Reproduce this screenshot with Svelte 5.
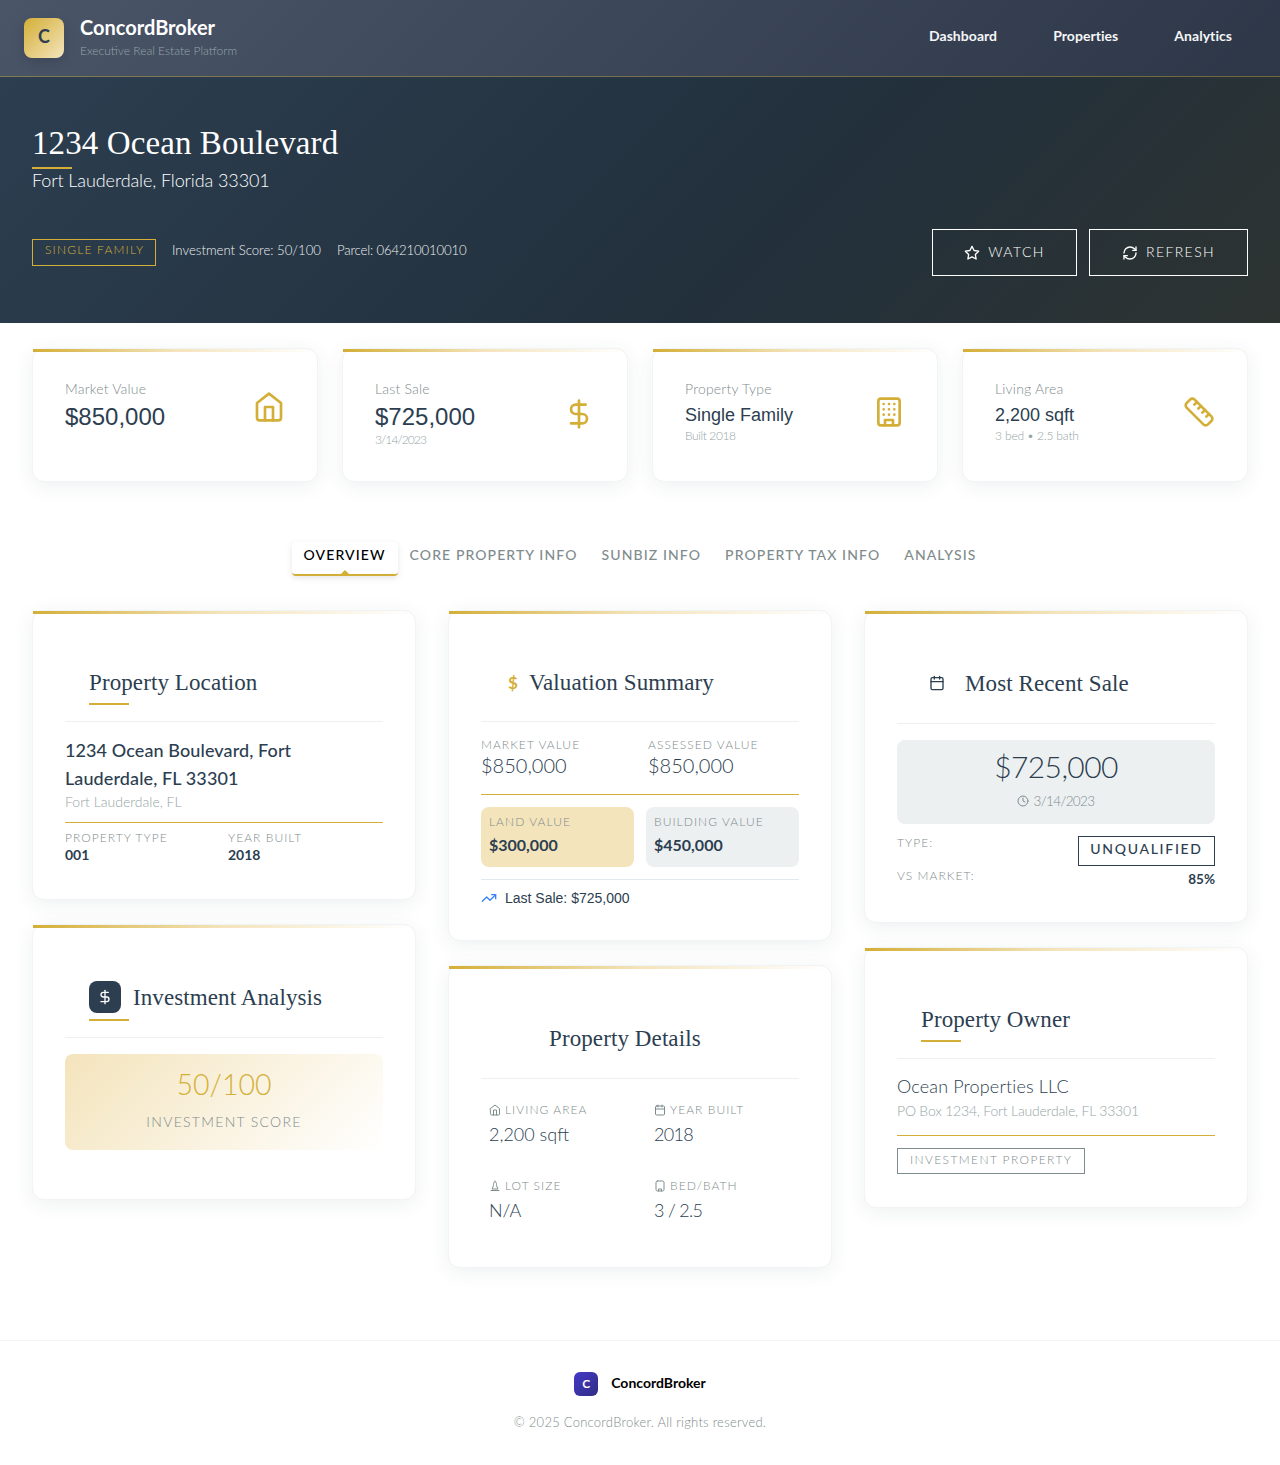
<script>
  const icons = {
    home: '<path d="m3 9 9-7 9 7v11a2 2 0 0 1-2 2H5a2 2 0 0 1-2-2z"/><polyline points="9 22 9 12 15 12 15 22"/>',
    dollar: '<line x1="12" x2="12" y1="2" y2="22"/><path d="M17 5H9.5a3.5 3.5 0 0 0 0 7h5a3.5 3.5 0 0 1 0 7H6"/>',
    building: '<rect x="4" y="2" width="16" height="20" rx="2"/><path d="M9 22v-4h6v4"/><path d="M8 6h.01M12 6h.01M16 6h.01M8 10h.01M12 10h.01M16 10h.01M8 14h.01M12 14h.01M16 14h.01"/>',
    ruler: '<path d="M21.3 15.3a2.4 2.4 0 0 1 0 3.4l-2.6 2.6a2.4 2.4 0 0 1-3.4 0L2.7 8.7a2.41 2.41 0 0 1 0-3.4l2.6-2.6a2.41 2.41 0 0 1 3.4 0Z"/><path d="m14.5 12.5 2-2M11.5 9.5l2-2M8.5 6.5l2-2M17.5 15.5l2-2"/>',
    star: '<polygon points="12 2 15.09 8.26 22 9.27 17 14.14 18.18 21.02 12 17.77 5.82 21.02 7 14.14 2 9.27 8.91 8.26 12 2"/>',
    refresh: '<path d="M3 12a9 9 0 0 1 9-9 9.75 9.75 0 0 1 6.74 2.74L21 8"/><path d="M21 3v5h-5"/><path d="M21 12a9 9 0 0 1-9 9 9.75 9.75 0 0 1-6.74-2.74L3 16"/><path d="M8 16H3v5"/>',
    calendar: '<path d="M8 2v4M16 2v4"/><rect x="3" y="4" width="18" height="18" rx="2"/><path d="M3 10h18"/>',
    clock: '<circle cx="12" cy="12" r="10"/><polyline points="12 6 12 12 16 14"/>',
    trend: '<polyline points="22 7 13.5 15.5 8.5 10.5 2 17"/><polyline points="16 7 22 7 22 13"/>',
    lot: '<path d="M12 3c2 1 3 3 3 6 0 4 2 6 3 9H6c1-3 3-5 3-9 0-3 1-5 3-6Z"/><path d="M4 21h16"/>',
    bed: '<rect x="4" y="2" width="16" height="20" rx="3"/><path d="M9 22v-4h6v4"/>'
  };

  const stats = [
    { label: "Market Value", value: "$850,000", icon: "home" },
    { label: "Last Sale", value: "$725,000", sub: "3/14/2023", icon: "dollar", subClass: "tight" },
    { label: "Property Type", value: "Single Family", sub: "Built 2018", icon: "building", small: true, subClass: "snug" },
    { label: "Living Area", value: "2,200 sqft", sub: "3 bed • 2.5 bath", icon: "ruler", small: true, subClass: "slight" }
  ];

  const tabs = ["Overview", "Core Property Info", "Sunbiz Info", "Property Tax Info", "Analysis"];

  const details = [
    { label: "Living Area", value: "2,200 sqft", icon: "home" },
    { label: "Year Built", value: "2018", icon: "calendar", tight: true },
    { label: "Lot Size", value: "N/A", icon: "lot" },
    { label: "Bed/Bath", value: "3 / 2.5", icon: "bed", tight: true }
  ];
</script>

{#snippet icon(name, size)}
  <svg class="icon" width={size} height={size} viewBox="0 0 24 24" fill="none" stroke="currentColor" stroke-width="2" stroke-linecap="round" stroke-linejoin="round">{@html icons[name]}</svg>
{/snippet}

<div class="page">
  <header class="topbar">
    <div class="brand">
      <div class="logo">C</div>
      <div>
        <div class="brand-name">ConcordBroker</div>
        <div class="brand-sub">Executive Real Estate Platform</div>
      </div>
    </div>
    <nav>
      <span>Dashboard</span>
      <span>Properties</span>
      <span>Analytics</span>
    </nav>
  </header>

  <section class="hero">
    <h1>1234 Ocean Boulevard</h1>
    <div class="hero-rule"></div>
    <div class="hero-city">Fort Lauderdale, Florida 33301</div>
    <div class="hero-row">
      <div class="hero-meta">
        <span class="hero-badge">SINGLE FAMILY</span>
        <span>Investment Score: 50/100</span>
        <span class="parcel">Parcel: 064210010010</span>
      </div>
      <div class="hero-actions">
        <button class="watch">{@render icon("star", 16)} <span>WATCH</span></button>
        <button class="refresh">{@render icon("refresh", 16)} <span>REFRESH</span></button>
      </div>
    </div>
  </section>

  <main>
    <div class="stats">
      {#each stats as s}
        <div class="card stat">
          <div class="stat-row">
            <div>
              <div class="stat-label">{s.label}</div>
              <div class="stat-value" class:small={s.small}>{s.value}</div>
              {#if s.sub}<div class="stat-sub {s.subClass}">{s.sub}</div>{/if}
            </div>
            <div class="stat-icon">{@render icon(s.icon, 32)}</div>
          </div>
        </div>
      {/each}
    </div>

    <div class="tabs">
      {#each tabs as t, i}
        <div class="tab" class:active={i === 0}>{t}</div>
      {/each}
    </div>

    <div class="columns">
      <div class="col">
        <div class="card panel">
          <div class="head ruled">
            <h3>Property Location</h3>
          </div>
          <div class="address">1234 Ocean Boulevard, Fort Lauderdale, FL 33301</div>
          <div class="muted-sm">Fort Lauderdale, FL</div>
          <div class="pair">
            <div>
              <div class="caps">PROPERTY TYPE</div>
              <div class="strong">001</div>
            </div>
            <div>
              <div class="caps">YEAR BUILT</div>
              <div class="strong">2018</div>
            </div>
          </div>
        </div>

        <div class="card panel">
          <div class="head ruled tall">
            <span class="square">{@render icon("dollar", 16)}</span>
            <h3>Investment Analysis</h3>
          </div>
          <div class="score">
            <div class="score-value">50/100</div>
            <div class="score-label">INVESTMENT SCORE</div>
          </div>
        </div>
      </div>

      <div class="col">
        <div class="card panel">
          <div class="head val">
            <span class="gold-dollar">$</span>
            <h3>Valuation Summary</h3>
          </div>
          <div class="val-grid">
            <div>
              <div class="caps">MARKET VALUE</div>
              <div class="light-value">$850,000</div>
            </div>
            <div>
              <div class="caps">ASSESSED VALUE</div>
              <div class="light-value">$850,000</div>
            </div>
          </div>
          <div class="val-boxes">
            <div class="val-box land">
              <div class="caps">LAND VALUE</div>
              <div class="val-box-num">$300,000</div>
            </div>
            <div class="val-box building">
              <div class="caps">BUILDING VALUE</div>
              <div class="val-box-num">$450,000</div>
            </div>
          </div>
          <div class="last-sale">
            <span class="trend">{@render icon("trend", 16)}</span>
            Last Sale: $725,000
          </div>
        </div>

        <div class="card panel">
          <div class="head details-head">
            <h3>Property Details</h3>
          </div>
          <div class="details">
            {#each details as d}
              <div>
                <div class="caps detail-label">{@render icon(d.icon, 12)} {d.label.toUpperCase()}</div>
                <div class="detail-value" class:tight={d.tight}>{d.value}</div>
              </div>
            {/each}
          </div>
        </div>
      </div>

      <div class="col">
        <div class="card panel">
          <div class="head sale-head">
            <span class="cal">{@render icon("calendar", 16)}</span>
            <h3>Most Recent Sale</h3>
          </div>
          <div class="sale-box">
            <div class="sale-price">$725,000</div>
            <div class="sale-date">{@render icon("clock", 12)} 3/14/2023</div>
          </div>
          <div class="sale-row">
            <span class="caps">TYPE:</span>
            <span class="sale-type">UNQUALIFIED</span>
          </div>
          <div class="sale-row market">
            <span class="caps">VS MARKET:</span>
            <span class="strong">85%</span>
          </div>
        </div>

        <div class="card panel">
          <div class="head ruled">
            <h3>Property Owner</h3>
          </div>
          <div class="owner-name">Ocean Properties LLC</div>
          <div class="muted-sm owner-addr">PO Box 1234, Fort Lauderdale, FL 33301</div>
          <div class="owner-tag-row">
            <span class="owner-tag">INVESTMENT PROPERTY</span>
          </div>
        </div>
      </div>
    </div>
  </main>

  <footer>
    <div class="foot-brand">
      <span class="foot-logo">C</span>
      <span class="foot-name">ConcordBroker</span>
    </div>
    <div class="foot-copy">© 2025 ConcordBroker. All rights reserved.</div>
  </footer>
</div>

<style>
  :global(body) {
    background: #fff;
  }

  .page {
    font-family: "Lato", "Liberation Sans", sans-serif;
    color: #2c3e50;
    background: #fff;
    min-height: 1465px;
  }

  .icon {
    display: block;
    flex: none;
  }

  /* top bar */
  .topbar {
    height: 76px;
    box-sizing: content-box;
    display: flex;
    align-items: center;
    justify-content: space-between;
    padding: 0 48px 0 24px;
    background: linear-gradient(135deg, #4a5568, #2d3748);
    border-bottom: 1px solid rgba(212, 175, 55, 0.4);
  }

  .brand {
    display: flex;
    align-items: center;
    gap: 16px;
  }

  .logo {
    width: 40px;
    height: 40px;
    box-sizing: border-box;
    padding-bottom: 4px;
    border-radius: 8px;
    display: flex;
    align-items: center;
    justify-content: center;
    background: linear-gradient(135deg, #d4af37, #f4e4bc);
    color: #2c3e50;
    font-weight: 700;
    font-size: 18px;
    box-shadow: 0 4px 12px rgba(0, 0, 0, 0.15);
  }

  .brand-name {
    color: #fff;
    font-size: 20px;
    font-weight: 700;
    line-height: 23px;
  }

  .brand-sub {
    color: #95a5a6;
    font-size: 12px;
    line-height: 20px;
    font-weight: 300;
    padding-top: 2px;
  }

  nav {
    display: flex;
    gap: 56px;
    padding-bottom: 6px;
    color: #f5f6f7;
    font-size: 14px;
    font-weight: 700;
    letter-spacing: 0.05px;
  }

  /* hero */
  .hero {
    height: 246px;
    box-sizing: border-box;
    padding: 47px 32px 0;
    color: #fff;
    background: linear-gradient(135deg, #2c3e50 0%, #22303c 60%, #2d3331 100%);
  }

  h1 {
    margin: 0;
    font-family: "Liberation Serif", serif;
    font-weight: 400;
    font-size: 33px;
    letter-spacing: 0.1px;
    line-height: 38px;
  }

  .hero-rule {
    width: 40px;
    height: 2px;
    margin-top: 5px;
    background: #d4af37;
  }

  .hero-city {
    font-size: 18px;
    font-weight: 300;
    letter-spacing: -0.1px;
    line-height: 24px;
    margin-top: -1px;
  }

  .hero-row {
    display: flex;
    align-items: center;
    justify-content: space-between;
    margin-top: 37px;
  }

  .hero-meta {
    display: flex;
    align-items: center;
    gap: 16px;
    font-size: 13.2px;
    font-weight: 300;
    color: #ecf0f1;
  }

  .hero-meta span {
    padding-bottom: 5px;
  }

  .hero-meta .parcel {
    letter-spacing: -0.15px;
  }

  .hero-meta .hero-badge {
    border: 1px solid #d4af37;
    color: #d4af37;
    font-size: 12px;
    letter-spacing: 1.2px;
    padding: 2px 12px 8px;
    width: 124px;
    box-sizing: border-box;
    white-space: nowrap;
  }

  .hero-actions {
    display: flex;
    gap: 12px;
  }

  .hero-actions button {
    height: 47px;
    display: flex;
    align-items: center;
    justify-content: center;
    gap: 8px;
    background: transparent;
    border: 1px solid #fff;
    color: #fff;
    font: inherit;
    font-size: 14px;
    font-weight: 300;
    letter-spacing: 1.4px;
  }

  .hero-actions button span {
    padding-bottom: 2px;
  }

  .watch {
    width: 145px;
  }

  .refresh {
    width: 159px;
  }

  /* content */
  main {
    padding: 25px 32px 0;
  }

  .card {
    position: relative;
    background: #fff;
    border: 1px solid #f1f3f4;
    border-radius: 12px;
    box-shadow: 0 4px 20px rgba(44, 62, 80, 0.08);
  }

  .card::before {
    content: "";
    position: absolute;
    top: 0;
    left: 0;
    right: 0;
    height: 3px;
    background: linear-gradient(90deg, #d4af37, #f4e4bc, transparent);
  }

  .stats {
    display: grid;
    grid-template-columns: repeat(4, 1fr);
    gap: 24px;
  }

  .stat {
    height: 134px;
    box-sizing: border-box;
    padding: 31px 32px 32px;
  }

  .stat-row {
    display: flex;
    align-items: center;
    justify-content: space-between;
  }

  .stat-label {
    font-size: 14px;
    font-weight: 300;
    letter-spacing: 0.2px;
    color: #7f8c8d;
    line-height: 17px;
  }

  .stat-value {
    font-family: "Liberation Sans", sans-serif;
    font-size: 24px;
    line-height: 32px;
    margin-top: 4px;
  }

  .stat-value.small {
    font-size: 18px;
    line-height: 28px;
  }

  .stat-sub {
    font-size: 12px;
    font-weight: 300;
    color: #95a5a6;
    line-height: 16px;
    margin-top: -1px;
  }

  .stat-sub.tight {
    letter-spacing: -0.9px;
  }

  .stat-sub.snug {
    letter-spacing: -0.4px;
  }

  .stat-sub.slight {
    letter-spacing: -0.15px;
  }

  .stat-icon {
    color: #d4af37;
  }

  .tabs {
    display: flex;
    justify-content: center;
    margin-top: 60px;
  }

  .tab {
    position: relative;
    padding: 0 12px;
    height: 32px;
    line-height: 26px;
    font-size: 14px;
    letter-spacing: 1.1px;
    text-transform: uppercase;
    color: #7f8c8d;
    font-weight: 500;
    white-space: nowrap;
  }

  .tab.active {
    color: #000;
    background: #fff;
    border-bottom: 2px solid #d4af37;
    border-radius: 4px;
    box-shadow: 0 2px 6px rgba(0, 0, 0, 0.1);
  }

  .tab.active::after {
    content: "";
    position: absolute;
    left: 50%;
    bottom: 0;
    margin-left: -4px;
    border: 4px solid transparent;
    border-top: 0;
    border-bottom-color: #d4af37;
  }

  .columns {
    display: grid;
    grid-template-columns: repeat(3, 1fr);
    gap: 32px;
    align-items: start;
    margin-top: 34px;
  }

  .col {
    display: flex;
    flex-direction: column;
    gap: 24px;
  }

  .panel {
    padding: 32px;
  }

  .head {
    position: relative;
    height: 79px;
    box-sizing: border-box;
    display: flex;
    align-items: center;
    gap: 12px;
    padding: 0 0 0 24px;
    border-bottom: 1px solid #ecf0f1;
    margin-bottom: 16px;
  }

  .head.tall {
    height: 81px;
  }

  h3 {
    margin: 0;
    padding-top: 2px;
    font-family: "Liberation Serif", serif;
    font-size: 23px;
    letter-spacing: 0.1px;
    font-weight: 400;
    color: #2c3e50;
  }

  .ruled::after {
    content: "";
    position: absolute;
    left: 24px;
    bottom: 16px;
    width: 40px;
    height: 2px;
    background: #d4af37;
  }

  .square {
    width: 32px;
    height: 32px;
    border-radius: 8px;
    background: #2c3e50;
    color: #fff;
    display: flex;
    align-items: center;
    justify-content: center;
  }

  .caps {
    font-size: 12px;
    line-height: 16px;
    letter-spacing: 1.05px;
    font-weight: 300;
    color: #7f8c8d;
  }

  .strong {
    font-size: 14px;
    font-weight: 700;
    line-height: 20px;
  }

  .muted-sm {
    font-size: 14px;
    font-weight: 300;
    color: #95a5a6;
    line-height: 20px;
  }

  .address {
    font-size: 18px;
    font-weight: 500;
    letter-spacing: 0.1px;
    line-height: 28px;
    margin-top: -2px;
  }

  .pair {
    display: grid;
    grid-template-columns: 1fr 1fr;
    gap: 8px;
    margin-top: 10px;
    padding-top: 7px;
    padding-bottom: 2px;
    border-top: 1px solid #d4af37;
  }

  .pair .strong {
    margin-top: -1px;
  }

  /* investment */
  .score {
    height: 96px;
    border-radius: 8px;
    text-align: center;
    background: linear-gradient(135deg, #f4e4bc, #fff);
    padding-top: 12px;
    box-sizing: border-box;
    margin-bottom: 17px;
  }

  .score-value {
    color: #d4af37;
    font-size: 28.5px;
    font-weight: 300;
    line-height: 36px;
  }

  .score-label {
    font-size: 14px;
    font-weight: 300;
    letter-spacing: 1.3px;
    color: #7f8c8d;
    margin-top: 11px;
  }

  /* valuation */
  .val {
    padding-left: 27px;
    gap: 11px;
  }

  .gold-dollar {
    color: #d4af37;
    font-size: 17px;
    font-weight: 700;
  }

  .val-grid {
    display: grid;
    grid-template-columns: 1fr 1fr;
    gap: 16px;
    margin-top: -1px;
    padding-bottom: 16px;
    border-bottom: 1px solid #d4af37;
  }

  .light-value {
    font-size: 20px;
    font-weight: 300;
    line-height: 26px;
    margin-top: -1px;
  }

  .val-boxes {
    display: grid;
    grid-template-columns: 1fr 1fr;
    gap: 12px;
    margin-top: 12px;
  }

  .val-box {
    height: 60px;
    box-sizing: border-box;
    padding: 7px 8px;
    border-radius: 8px;
  }

  .land {
    background: #f4e4bc;
  }

  .building {
    background: #ecf0f1;
  }

  .val-box-num {
    font-size: 16px;
    font-weight: 700;
    line-height: 22px;
    margin-top: 4px;
  }

  .last-sale {
    display: flex;
    align-items: center;
    gap: 8px;
    margin-top: 12px;
    padding-top: 8px;
    border-top: 1px solid #e2e8f0;
    font-family: "Liberation Sans", sans-serif;
    font-size: 14px;
    line-height: 20px;
  }

  .trend {
    color: #3b82f6;
  }

  /* details */
  .details-head {
    height: 81px;
    padding-left: 68px;
  }

  .details {
    display: grid;
    grid-template-columns: 1fr 1fr;
    row-gap: 31px;
    column-gap: 28px;
    padding: 7px 8px 0;
    margin-bottom: 12px;
  }

  .detail-label {
    display: flex;
    align-items: center;
    gap: 4px;
  }

  .detail-label .icon {
    color: #7f8c8d;
  }

  .detail-value {
    font-size: 18px;
    font-weight: 300;
    line-height: 26px;
    margin-top: 3px;
  }

  .detail-value.tight {
    letter-spacing: -0.7px;
  }

  /* sale */
  .sale-head {
    height: 81px;
    padding-left: 32px;
    gap: 20px;
  }

  .sale-box {
    height: 84px;
    box-sizing: border-box;
    padding-top: 7px;
    background: #ecf0f1;
    border-radius: 8px;
    text-align: center;
  }

  .sale-price {
    font-size: 30px;
    font-weight: 300;
    letter-spacing: -0.6px;
    line-height: 38px;
  }

  .sale-date {
    display: flex;
    align-items: center;
    justify-content: center;
    gap: 4px;
    margin-top: 8px;
    font-size: 13.5px;
    letter-spacing: -0.6px;
    font-weight: 300;
    color: #7f8c8d;
  }

  .sale-row {
    display: flex;
    justify-content: space-between;
    align-items: flex-start;
    margin-top: 12px;
  }

  .sale-row > .caps:first-child {
    margin-top: -1px;
  }

  .sale-row.market {
    margin-top: 3px;
    margin-bottom: 1px;
  }

  .sale-row .strong {
    font-size: 13.5px;
  }

  .sale-type {
    border: 1px solid #2c3e50;
    width: 137px;
    text-align: center;
    height: 30px;
    line-height: 24px;
    box-sizing: border-box;
    font-size: 14px;
    letter-spacing: 1.7px;
    font-weight: 500;
  }

  /* owner */
  .owner-name {
    font-size: 18px;
    font-weight: 300;
    letter-spacing: 0.15px;
    line-height: 26px;
    margin-top: -2px;
  }

  .owner-addr {
    margin-top: 2px;
    letter-spacing: -0.2px;
  }

  .owner-tag-row {
    margin-top: 14px;
    margin-bottom: 1px;
    padding-top: 12px;
    border-top: 1px solid #d4af37;
  }

  .owner-tag {
    display: inline-block;
    border: 1px solid #7f8c8d;
    height: 26px;
    line-height: 22px;
    box-sizing: border-box;
    padding: 0 12px;
    font-size: 12px;
    font-weight: 300;
    letter-spacing: 1.4px;
    color: #7f8c8d;
  }

  /* footer */
  footer {
    margin-top: 72px;
    height: 125px;
    box-sizing: border-box;
    border-top: 1px solid #f5f5f5;
    padding-top: 31px;
    text-align: center;
  }

  .foot-brand {
    display: flex;
    align-items: center;
    justify-content: center;
    gap: 13px;
  }

  .foot-logo {
    width: 24px;
    height: 24px;
    border-radius: 6px;
    background: linear-gradient(135deg, #4338ca, #312e81);
    color: #fff;
    font-size: 12px;
    font-weight: 700;
    line-height: 24px;
  }

  .foot-name {
    font-size: 14px;
    font-weight: 700;
    color: #000;
    padding-bottom: 3px;
  }

  .foot-copy {
    margin-top: 18px;
    font-size: 13px;
    letter-spacing: 0.25px;
    font-weight: 300;
    color: #7f8c8d;
  }
</style>
